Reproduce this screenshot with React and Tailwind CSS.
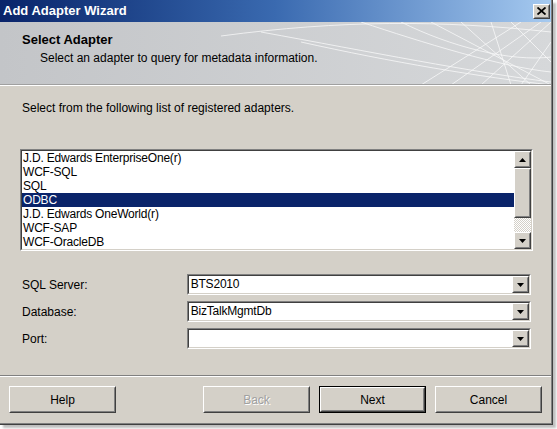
import React from "react";

const adapters = [
  "J.D. Edwards EnterpriseOne(r)",
  "WCF-SQL",
  "SQL",
  "ODBC",
  "J.D. Edwards OneWorld(r)",
  "WCF-SAP",
  "WCF-OracleDB",
];

const font = { fontFamily: '"Liberation Sans", Arial, sans-serif' };

// classic raised 3D button border
const Raised = ({ className = "", children }) => (
  <div className={`border border-t-white border-l-white border-r-[#404040] border-b-[#404040] ${className}`}>
    <div className="w-full h-full border border-t-[#d4d0c8] border-l-[#d4d0c8] border-r-[#808080] border-b-[#808080] bg-[#d4d0c8] flex items-center justify-center">
      {children}
    </div>
  </div>
);

const ArrowDown = () => (
  <svg width="7" height="4" viewBox="0 0 7 4">
    <path d="M0 0h7L3.5 4z" fill="#000" />
  </svg>
);

const ArrowUp = () => (
  <svg width="7" height="4" viewBox="0 0 7 4">
    <path d="M0 4h7L3.5 0z" fill="#000" />
  </svg>
);

const Combo = ({ value }) => (
  <div className="w-[345px] h-[21px] border border-t-[#808080] border-l-[#808080] border-r-white border-b-white">
    <div className="w-full h-full border border-t-[#404040] border-l-[#404040] border-r-[#d4d0c8] border-b-[#d4d0c8] bg-white flex">
      <div className="flex-1 px-[2px] text-[12px] leading-[17px] text-black tracking-[-0.2px]">{value}</div>
      <Raised className="w-[17px] h-[17px]">
        <ArrowDown />
      </Raised>
    </div>
  </div>
);

const Button = ({ label, disabled, isDefault }) => (
  <div className={`w-[107px] h-[27px] ${isDefault ? "border border-black" : ""}`}>
    <Raised className="w-full h-full">
      <span className={`text-[12px] ${disabled ? "text-[#a0a0a0]" : "text-black"}`} style={disabled ? { textShadow: "1px 1px 0 #fff" } : undefined}>
        {label}
      </span>
    </Raised>
  </div>
);

export default function App() {
  return (
    <div className="w-[557px] h-[429px] bg-white" style={font}>
      <div className="w-[553px] h-[425px] border-r border-b border-r-[#404040] border-b-[#404040] shadow-[3px_3px_2px_rgba(0,0,0,0.25)]">
        <div className="w-full h-full border-r border-b border-r-[#808080] border-b-[#808080] bg-[#d4d0c8] flex flex-col">
          {/* Title bar */}
          <div className="h-[22px] bg-gradient-to-r from-[#0a246a] via-[#3a6ab0] to-[#a6caf0] flex items-center justify-between pl-[3px] pr-[1px]">
            <span className="text-white font-bold text-[13px]">Add Adapter Wizard</span>
            <Raised className="w-[17px] h-[15px]">
              <svg width="9" height="8" viewBox="0 0 9 8">
                <path d="M0.5 0.5l8 7M8.5 0.5l-8 7" stroke="#000" strokeWidth="1.8" />
              </svg>
            </Raised>
          </div>

          {/* Header */}
          <div className="relative h-[63px] bg-gradient-to-r from-[#c3c5c8] to-[#d6d8da] border-b border-b-[#a0a0a0] overflow-hidden">
            <svg className="absolute right-0 top-0" width="330" height="63" viewBox="0 0 330 63" fill="none" stroke="#ffffff" strokeWidth="0.8" opacity="0.85">
              <path d="M0 14 C120 -2 220 -2 330 10" />
              <path d="M40 10 C150 30 250 50 330 60" />
              <path d="M80 20 C170 40 260 55 330 63" />
              <path d="M140 0 C200 20 280 45 330 50" />
              <path d="M180 0 C230 25 290 40 330 35" />
              <path d="M210 0 L330 63" />
              <path d="M240 0 L310 63" />
              <path d="M270 0 L290 63" />
              <path d="M290 0 L330 40" />
              <path d="M260 63 L330 0" />
              <path d="M230 63 L320 0" />
              <path d="M200 63 L300 0" />
              <path d="M300 63 L330 20" />
            </svg>
            <div className="relative pl-[22px] pt-[10px]">
              <div className="font-bold text-[13px] text-black leading-[16px]">Select Adapter</div>
              <div className="pl-[18px] pt-[3px] text-[12px] text-black leading-[14px]">
                Select an adapter to query for metadata information.
              </div>
            </div>
          </div>
          <div className="h-px bg-white" />

          {/* Body */}
          <div className="flex-1 flex flex-col px-[20px]">
            <div className="pt-[15px] pl-[2px] text-[12px] text-black leading-[14px]">
              Select from the following list of registered adapters.
            </div>

            {/* List box */}
            <div className="mt-[34px] w-[513px] h-[102px] border border-t-[#808080] border-l-[#808080] border-r-white border-b-white">
              <div className="w-full h-full border border-t-[#404040] border-l-[#404040] border-r-[#d4d0c8] border-b-[#d4d0c8] bg-white flex">
                <div className="flex-1">
                  {adapters.map((a) => (
                    <div
                      key={a}
                      className={`h-[14px] leading-[14px] pl-[1px] text-[12px] tracking-[-0.2px] ${a === "ODBC" ? "bg-[#0a246a] text-white" : "text-black"}`}
                    >
                      {a}
                    </div>
                  ))}
                </div>
                <div className="w-[17px] flex flex-col">
                  <Raised className="w-[17px] h-[17px]">
                    <ArrowUp />
                  </Raised>
                  <Raised className="w-[17px] h-[50px]" />
                  <div className="flex-1 bg-[repeating-conic-gradient(#ffffff_0_25%,#d4d0c8_0_50%)] bg-[length:2px_2px]" />
                  <Raised className="w-[17px] h-[17px]">
                    <ArrowDown />
                  </Raised>
                </div>
              </div>
            </div>

            {/* Fields */}
            <div className="mt-[23px] flex flex-col gap-[6px]">
              {[
                ["SQL Server:", "BTS2010"],
                ["Database:", "BizTalkMgmtDb"],
                ["Port:", ""],
              ].map(([label, value]) => (
                <div key={label} className="flex items-center h-[21px]">
                  <div className="w-[167px] pl-[2px] text-[12px] text-black">{label}</div>
                  <Combo value={value} />
                </div>
              ))}
            </div>
          </div>

          {/* Separator */}
          <div className="h-px bg-[#808080]" />
          <div className="h-px bg-white" />

          {/* Buttons */}
          <div className="h-[46px] flex items-start pt-[9px] px-[9px]">
            <Button label="Help" />
            <div className="flex-1" />
            <div className="flex gap-[9px]">
              <Button label="Back" disabled />
              <Button label="Next" isDefault />
              <Button label="Cancel" />
            </div>
          </div>
        </div>
      </div>
    </div>
  );
}
